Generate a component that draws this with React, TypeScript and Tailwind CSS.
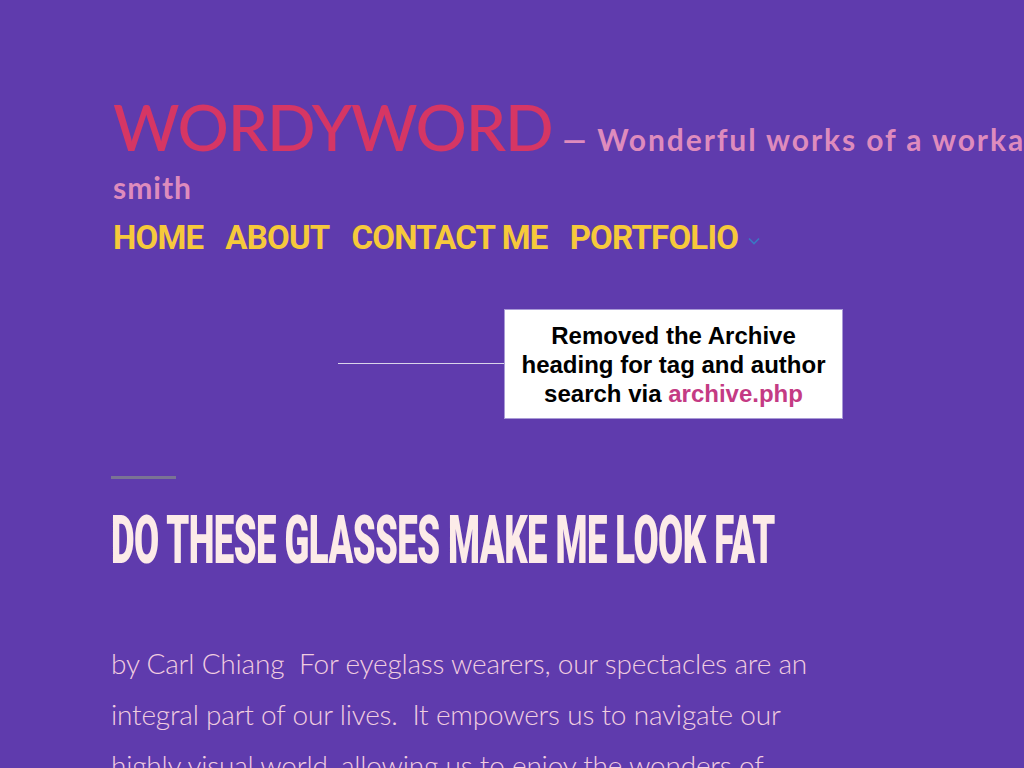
const NAV = ["HOME", "ABOUT", "CONTACT ME", "PORTFOLIO"];

function Chevron() {
  return (
    <svg viewBox="0 0 12 8" className="ml-[10px] mt-[6px] h-[8px] w-[12px]" fill="none">
      <path d="M1 1.5 6 6.5 11 1.5" stroke="#3b78c4" strokeWidth="1.6" />
    </svg>
  );
}

function Callout() {
  return (
    <>
      {/* annotation leader line and note box sit over the page */}
      <div className="absolute left-[338px] top-[363px] h-[1px] w-[166px] bg-[#d9d4ea]" />
      <div className="absolute left-[504px] top-[309px] flex h-[110px] w-[339px] items-center justify-center border border-[#a99ad6] bg-white">
        <p className="text-center font-['Liberation_Sans',Arial,sans-serif] text-[24px] font-bold leading-[29px] text-black">
          Removed the Archive
          <br />
          heading for tag and author
          <br />
          search via <span className="text-[#c43b84]">archive.php</span>
        </p>
      </div>
    </>
  );
}

export default function App() {
  return (
    <div className="relative h-[768px] w-[1024px] overflow-hidden bg-[#5f3bad]">
      <header className="pl-[113px] pt-[92px]">
        <div className="flex items-baseline whitespace-nowrap font-['Lato',sans-serif]">
          <span className="text-[64px] font-medium leading-[70px] tracking-[-1.2px] text-[#d63664]">
            WORDYWORD
          </span>
          <span className="ml-[10px] text-[30px] font-bold tracking-[1.9px] text-[#de8bbd]">
            — Wonderful works of a workaholic word
          </span>
        </div>
        <div className="mt-[10px] font-['Lato',sans-serif] text-[30px] font-bold leading-[30px] tracking-[1px] text-[#de8bbd]">
          smith
        </div>
        <nav className="mt-[18px] flex items-center gap-[22px] font-['Roboto',sans-serif] text-[33px] font-bold leading-[36px] tracking-[-0.8px] text-[#f6c93b]">
          {NAV.map((n, i) => (
            <span key={n} className="flex items-center">
              {n}
              {i === NAV.length - 1 && <Chevron />}
            </span>
          ))}
        </nav>
      </header>

      <Callout />

      <main className="pl-[111px] pt-[220px]">
        <div className="h-[3px] w-[65px] bg-[#7a7394]" />
        <h1 className="mt-[30px] origin-left scale-x-[0.545] whitespace-nowrap font-['Roboto',sans-serif] text-[67px] font-black leading-[62px] tracking-[-1px] text-[#fcebe8]">
          DO THESE GLASSES MAKE ME LOOK FAT
        </h1>
        <p className="mt-[67px] w-[725px] font-['Lato',sans-serif] text-[28px] font-light leading-[51px] tracking-[-0.2px] text-[#f1cde0]">
          by Carl Chiang&nbsp; For eyeglass wearers, our spectacles are an integral part of our lives.&nbsp; It empowers us to navigate our highly visual world, allowing us to enjoy the wonders of
        </p>
      </main>
    </div>
  );
}
